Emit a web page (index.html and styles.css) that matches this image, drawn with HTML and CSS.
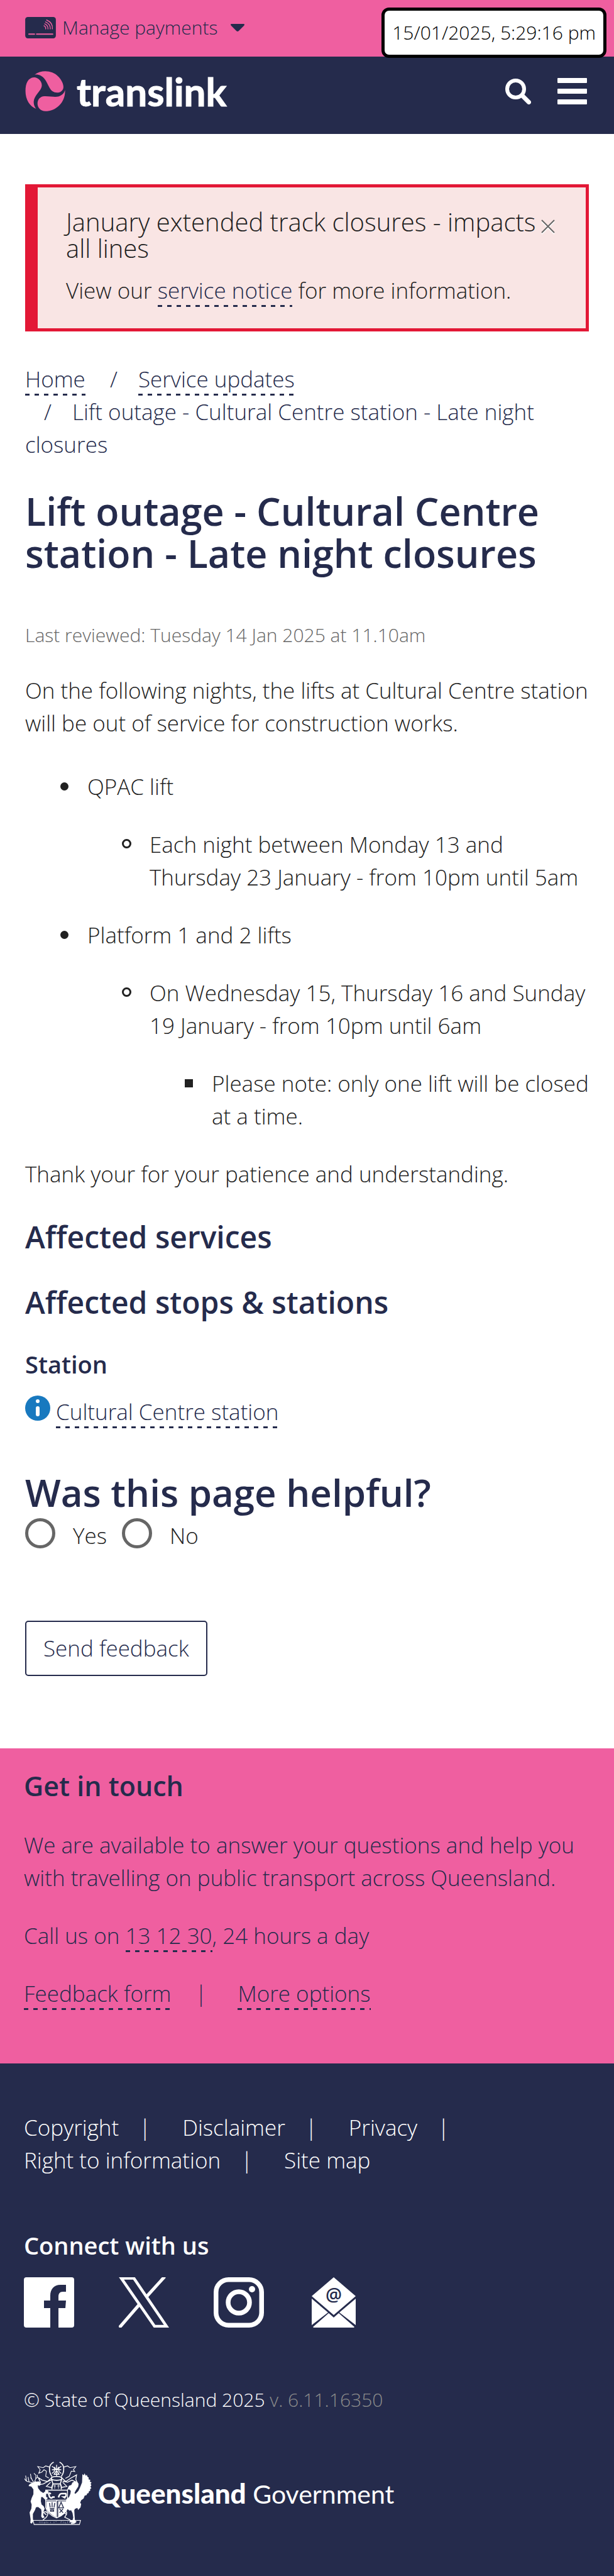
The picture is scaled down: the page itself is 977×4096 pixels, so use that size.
FILE: index.html
```html
<!DOCTYPE html>
<html lang="en">
<head>
<meta charset="utf-8">
<meta name="viewport" content="width=device-width">
<title>Lift outage - Cultural Centre station - Late night closures | Translink</title>
<link rel="stylesheet" href="styles.css">
</head>
<body>
<div class="topbar">
  <button class="payments" type="button">
    <svg class="card-icon" viewBox="0 0 175 122" aria-hidden="true">
      <rect width="175" height="122" rx="15" fill="currentColor"/>
      <g fill="none" stroke="#ef5fa0" stroke-width="6" stroke-linecap="round">
        <path d="M21 98h32M65 98h92" stroke-width="7"/>
        <path d="M107 50q11 5 10 18M111 39q20 9 19 29M116 28q29 12 27 40M122 17q37 16 33 51" stroke-width="5"/>
      </g>
    </svg>
    Manage payments
    <svg class="caret" viewBox="0 0 22 12" aria-hidden="true"><path d="M1 0h20q2 1 0 3l-8 8q-2 2-4 0L1 3Q-1 1 1 0z" fill="currentColor"/></svg>
  </button>
  <time class="clock">15/01/2025, 5:29:16 pm</time>
</div>
<header class="header">
  <a class="brand" href="#">
    <svg class="brand-mark" viewBox="54 49 232 234" aria-hidden="true">
      <g fill="#ef5fa0">
        <path d="M108 70C150 40 210 45 245 80C270 105 280 135 274 152C266 174 235 182 210 165C188 147 177 90 145 76C132 70 120 68 108 70Z"/>
        <path d="M105 86C130 86 152 110 150 135C147 165 105 190 103 225C102 245 110 260 117 268C80 255 55 215 55 165C55 120 70 88 105 86Z"/>
        <path d="M285 160C288 230 235 282 170 282C145 282 125 262 125 238C125 215 140 196 165 195C200 194 225 203 250 196C268 190 280 178 285 160Z"/>
      </g>
    </svg>
    <span>translink</span>
  </a>
  <div class="tools">
    <button class="icon-button" type="button" aria-label="Search">
      <svg class="search-icon" viewBox="0 0 41 41" aria-hidden="true"><g fill="none" stroke="currentColor"><circle cx="16.500" cy="16.500" r="13.500" stroke-width="6"/><path d="M27 27l10.500 10.500" stroke-width="7" stroke-linecap="round"/></g></svg>
    </button>
    <button class="icon-button" type="button" aria-label="Menu">
      <svg class="menu-icon" viewBox="0 0 47 42" aria-hidden="true"><g fill="currentColor"><rect width="47" height="8" rx="1"/><rect y="17" width="47" height="8" rx="1"/><rect y="34" width="47" height="8" rx="1"/></g></svg>
    </button>
  </div>
</header>

<main class="main">
  <section class="alert">
    <div class="alert-head">
      <h2 class="alert-title">January extended track closures - impacts all lines</h2>
      <button class="close" type="button" aria-label="Close"><svg viewBox="0 0 24 24" aria-hidden="true"><path d="M2 4l20 20M22 4L2 24" stroke="#fff" stroke-width="2"/><path d="M2 2l20 20M22 2L2 22" stroke="#666" stroke-width="2"/></svg></button>
    </div>
    <p class="alert-text">View our <a class="link" href="#">service notice</a> for more information.</p>
  </section>

  <nav aria-label="Breadcrumb">
    <ol class="crumbs">
      <li><a class="link" href="#">Home</a></li>
      <li><a class="link" href="#">Service updates</a></li>
      <li>Lift outage - Cultural Centre station - Late night closures</li>
    </ol>
  </nav>

  <h1 class="title">Lift outage - Cultural Centre station - Late night closures</h1>
  <p class="reviewed">Last reviewed: Tuesday 14 Jan 2025 at 11.10am</p>

  <div class="content">
    <p>On the following nights, the lifts at Cultural Centre station will be out of service for construction works.</p>
    <ul class="list">
      <li>QPAC lift
        <ul>
          <li>Each night between Monday 13 and Thursday 23 January - from 10pm until 5am</li>
        </ul>
      </li>
      <li>Platform 1 and 2 lifts
        <ul>
          <li>On Wednesday 15, Thursday 16 and Sunday 19 January - from 10pm until 6am
            <ul>
              <li>Please note: only one lift will be closed at a time.</li>
            </ul>
          </li>
        </ul>
      </li>
    </ul>
    <p>Thank your for your patience and understanding.</p>
  </div>

  <h2 class="section-title">Affected services</h2>
  <h2 class="section-title">Affected stops &amp; stations</h2>
  <h3 class="sub-title">Station</h3>
  <p class="station">
    <svg class="info-icon" viewBox="0 0 40 40" aria-hidden="true"><circle cx="20" cy="20" r="20" fill="#1879bf"/><circle cx="20" cy="9" r="3" fill="#fff"/><path d="M20 20v10" stroke="#fff" stroke-width="6" stroke-linecap="round"/></svg>
    <span><a class="link" href="#">Cultural Centre station</a></span>
  </p>

  <form class="feedback">
    <h2 class="title helpful">Was this page helpful?</h2>
    <div class="choices">
      <label class="choice"><input type="radio" name="helpful" value="yes">Yes</label>
      <label class="choice"><input type="radio" name="helpful" value="no">No</label>
    </div>
    <button class="send" type="button">Send feedback</button>
  </form>
</main>

<section class="contact">
  <h2 class="section-title">Get in touch</h2>
  <p>We are available to answer your questions and help you with travelling on public transport across Queensland.</p>
  <p>Call us on <a class="link" href="#">13 12 30</a>, 24 hours a day</p>
  <ul class="inline-links">
    <li><a class="link" href="#">Feedback form</a></li>
    <li><a class="link" href="#">More options</a></li>
  </ul>
</section>

<footer class="footer">
  <ul class="footer-links">
    <li><a href="#">Copyright</a></li>
    <li><a href="#">Disclaimer</a></li>
    <li><a href="#">Privacy</a></li>
    <li><a href="#">Right to information</a></li>
    <li><a href="#">Site map</a></li>
  </ul>
  <h3 class="sub-title connect">Connect with us</h3>
  <div class="social">
    <a href="#" aria-label="Facebook"><svg viewBox="0 0 80 80"><path fill="currentColor" d="M4 0h72a4 4 0 0 1 4 4v72a4 4 0 0 1-4 4H55V49h11l1-12H55v-6c0-5 2-8 7-8h5V12h-9C48 12 42 19 42 29v8H32v12h10v31H4a4 4 0 0 1-4-4V4a4 4 0 0 1 4-4z"/></svg></a>
    <a href="#" aria-label="X"><svg viewBox="0 0 80 80"><path fill="none" stroke="currentColor" stroke-width="4.500" d="M4 1.500h20L76 78H57z"/><path fill="none" stroke="currentColor" stroke-width="5" d="M73-1L44 31M33 43L1 80"/></svg></a>
    <a href="#" aria-label="Instagram"><svg viewBox="0 0 80 80"><g fill="none" stroke="currentColor" stroke-width="7.500"><rect x="3.750" y="3.750" width="72.500" height="72.500" rx="20"/><circle cx="40" cy="40" r="17"/></g><circle cx="61" cy="19" r="5" fill="currentColor"/></svg></a>
    <a href="#" aria-label="Email"><svg viewBox="0 0 80 80"><g fill="currentColor"><path d="M40 0l35 30-35 30L5 30z"/><path d="M5 34l26 22L5 76zM75 34L49 56l26 20z"/><path d="M7 79l25-22 8 7 8-7 25 22-1 1H8z"/></g><text class="at" x="40" y="38" text-anchor="middle">@</text></svg></a>
  </div>
  <p class="legal">© State of Queensland 2025 <span>v. 6.11.16350</span></p>
  <a class="gov" href="#">
    <svg class="crest" viewBox="24 20 392 364" aria-hidden="true">
      <g fill="#fff">
        <path d="M56 150l14-8 12-4 8-6 6 3 14-2 6 5 6 14-8 6-10-2 2 16 14 18 16 10 14-12 10-2 8 8-2 10-16 2-2 14 14 8-4 8-12 2-14-14-8 0-2 24 4 18 12 10 6 14-6 16-2 22 8 14-14 3-6-10 2-24-2-16-18-14-12 2-6 16-12 22 0 24 2 18-8 14-9-4 2-20-6-40 10-22 2-24-6-18 6-20 10-22 0-28-12-16-16-3z"/>
        <path d="M284 158l14-4 6-14 14-7 14 4 8 10-2 16-14 22-8 16 6 4 16-16 10-20 12-30 2-48 8 8 4-12 8 14 5-6 5 13 6 2 0 12 10 2-3 10 10 6-6 8 5 8-6 8 6 8-8 6 2 8-9 6-1 8-9 4-2 8-12 4-6 16-14 10-6 14 6 8-4 20-14 14-4-12-14 6-4 8 2 34 2 24 10 8-12 10-16 4-6-2 4-8-14-2 6-8 14-2 4-16-4-26-8-16-10 2-10-8-8 4-12-14 2-14-4-12 12-6 2-16 16-12 8-20 2-16-8-8-8 0-8 8z"/>
        <path d="M154 248h56v92q-44-20-56-52zM222 248h56v40q-10 32-52 52h-4z"/>
      </g>
      <g fill="none" stroke="#fff" stroke-width="4">
        <path d="M28 118q8 16 24 18l24 6M40 134l-6-34M54 136l-6-28M80 138l-14-24-4-24M70 116l-8-4M86 134l6-14 2-22-12-12M92 118l10-8 0-14"/>
        <path d="M150 184h126v58H150zM150 184q6 10 0 20v80q12 42 63 60 51-18 63-60V184M213 242v102" stroke-width="5"/>
        <path d="M186 180q-2-18 6-32h42q8 14 6 32M192 148l-8-26M234 148l8-26M184 110q30-10 58 0v12q-28 10-58 0z" stroke-width="6"/>
        <path d="M202 152v24M195 160h14M224 152v24M217 160h14" stroke-width="3"/>
        <path d="M186 46l14 10v20l-14 12M240 46l-14 10v20l14 12M186 66h54M213 38v66M196 92h34M200 50l26 40M226 50l-26 40" stroke-width="5"/>
        <path d="M196 22q-26 12-24 42 0 22 14 40M230 22q26 12 24 42 0 22-14 40" stroke-width="6"/>
        <path d="M170 50l-20-6-14 10-32-6 14 18-8 20 18-6 12-14 14 8-4 30 18 10M256 50l20-6 14 10 34-6-14 18 8 10-20-2-12 30-22 12"/>
        <path d="M182 114l-22 20-30-8-22-14 12 28-10 12 26-4 30-16 20-8M244 114l22 20 30-20 32-18-4 26 8 18-30-14-26 12-28-6M178 138l-24 24 32 8 6-22M248 138l24 24-30 6-6-20" stroke-width="5"/>
        <path d="M154 326q-26-18-6-18 26 6 4 34l-18 14M272 326q-22-16-8-20 16 6-4 34l32 16" stroke-width="5"/>
        <path d="M77 358h274l-6 24H83z" stroke-width="4"/>
      </g>
      <g fill="none" stroke="#252b4c" stroke-width="5">
        <path d="M172 258l4 26M187 254v30M202 258l-4 26M174 290h26M178 298h18v8h-18z"/>
        <path d="M239 254l-14 32h28zM230 292l20 22M250 292l-20 22"/>
      </g>
      <g fill="none" stroke="#fff" stroke-width="9"><path d="M166 202l6 20q10 14 18 2l12 0M170 198l10 8M224 226q6-24 20-22l22 0q8 20-12 20l10 6"/></g>
      <path d="M114 374v-10M122 374v-10M130 374v-10M140 366v8h6v-8M154 374v-10M162 366v8M178 366v8M198 374v-10M206 366h8M238 374v-10h6M252 374v-10M262 366v8h6M276 374v-10h6M290 374v-10M302 366v8h8" fill="none" stroke="#aab0c4" stroke-width="2"/>
    </svg>
    <span><b>Queensland</b> Government</span>
  </a>
</footer>
</body>
</html>
```

FILE: styles.css
```css
:root {
  --navy: #252b4c;
  --pink: #ef5fa0;
}

*, *::before, *::after { box-sizing: border-box; }

body {
  margin: 0;
  background: #fff;
  color: #212121;
  font: 300 35px/52px "Open Sans", "Noto Sans", sans-serif;
}

h1, h2, h3, p, ul, ol { margin: 0; }
ol, ul { padding: 0; }
svg { display: block; }
a { color: inherit; text-decoration: none; }

button {
  margin: 0;
  padding: 0;
  border: 0;
  background: none;
  color: inherit;
  font: inherit;
}

.link {
  padding-bottom: 3px;
  color: var(--navy);
  background: repeating-linear-gradient(90deg, var(--navy) 0 7px, transparent 7px 15px) 0 100% / 100% 3px no-repeat;
}

.topbar {
  position: relative;
  display: flex;
  align-items: flex-start;
  height: 90px;
  padding: 20px 40px;
  background: var(--pink);
  color: var(--navy);
}

.payments {
  display: flex;
  align-items: center;
  gap: 10px;
  font-size: 30px;
  line-height: 48px;
}

.card-icon { width: 49px; height: 34px; }
.caret { width: 24px; height: 12px; margin-left: 10px; }

.clock {
  position: absolute;
  top: 12px;
  right: 12px;
  padding: 14px 12px;
  border: 5px solid #000;
  border-radius: 12px;
  background: #fff;
  color: #000;
  font-size: 30px;
  line-height: 42px;
}

.header {
  display: flex;
  align-items: center;
  justify-content: space-between;
  padding: 23px 43px 36px 40px;
  background: var(--navy);
  color: #fff;
}

.brand { display: flex; align-items: center; gap: 18px; }
.brand-mark { width: 64px; height: 64px; }

.brand span {
  font: 700 62px/64px Lato, sans-serif;
  -webkit-text-stroke: 1px #fff;
}

.tools { display: flex; align-items: center; gap: 42px; }
.search-icon { width: 41px; height: 41px; }
.menu-icon { width: 47px; height: 42px; }

.main { padding: 80px 40px 115px; }

.alert {
  padding: 34px 48px 34px 45px;
  border: 5px solid #e31836;
  border-left-width: 20px;
  background: #f9e5e4;
}

.alert-head { display: flex; justify-content: space-between; }
.alert-title { font-size: 40px; font-weight: 300; line-height: 42px; }
.close { align-self: flex-start; margin-top: 16px; }
.close svg { width: 24px; height: 24px; overflow: visible; }
.alert-text { margin-top: 20px; }

.crumbs {
  margin-top: 50px;
  color: var(--navy);
  list-style: none;
}

.crumbs li { display: inline-block; }
.crumbs li + li::before { content: "/"; padding: 0 33px 0 30px; }

.title {
  margin-top: 46px;
  color: var(--navy);
  font: 600 61px/67px "Open Sans", sans-serif;
}

.reviewed {
  margin-top: 73px;
  color: #666;
  font-size: 30px;
  line-height: 48px;
}

.content { margin: 38px -4px 0 0; }
.list { margin: 49px 0 40px; }
.list, .list ul { padding-left: 99px; list-style: none; }
.list ul { margin-top: 40px; }
.list > li + li { margin-top: 40px; }

.list li::before {
  content: "";
  display: inline-block;
  width: 13px;
  height: 13px;
  margin: 0 30px 0 -43px;
  border-radius: 50%;
  background: #212121;
  vertical-align: 7px;
}

.list ul li::before {
  width: 15px;
  height: 15px;
  margin: 0 29px 0 -44px;
  border: 3px solid #212121;
  background: none;
}

.list ul ul li::before {
  width: 13px;
  height: 13px;
  margin: 0 30px 0 -43px;
  border: 0;
  border-radius: 0;
  background: #212121;
}

.section-title {
  margin-top: 46px;
  color: var(--navy);
  font: 600 48px/56px "Open Sans", sans-serif;
}

.section-title + .section-title { margin-top: 48px; }

.sub-title {
  margin-top: 46px;
  color: var(--navy);
  font: 600 38px/48px "Open Sans", sans-serif;
}

.station {
  display: flex;
  align-items: flex-start;
  gap: 9px;
  margin-top: 26px;
}

.info-icon { width: 40px; height: 40px; }

.helpful { margin-top: 69px; font-size: 60px; }

.choices { display: flex; gap: 24px; margin-top: 7px; }

.choice {
  display: flex;
  align-items: flex-start;
  gap: 28px;
  line-height: 56px;
}

.choice input {
  width: 48px;
  height: 48px;
  margin: 0;
  border: 5px solid #666;
  border-radius: 50%;
  background: #fff;
  appearance: none;
}

.choice input:checked { background: var(--navy); }

.send {
  margin-top: 107px;
  padding: 16px 27px;
  border: 2px solid var(--navy);
  border-radius: 5px;
  color: var(--navy);
  line-height: 52px;
}

.contact {
  padding: 32px 38px 85px;
  background: var(--pink);
  color: var(--navy);
}

.contact .section-title { margin-top: 0; font-size: 43px; }
.contact p, .inline-links { margin-top: 40px; }

.inline-links, .footer-links {
  display: flex;
  flex-wrap: wrap;
  list-style: none;
}

.inline-links li + li::before { content: "|"; margin: 0 49px 0 38px; }

.footer {
  padding: 76px 38px 82px;
  background: var(--navy);
  color: #fff;
}

.footer-links { max-width: 800px; }
.footer-links li:not(:last-child)::after { content: "|"; margin: 0 50px 0 32px; }

.connect { margin-top: 85px; color: #fff; }

.social { display: flex; gap: 71px; margin-top: 27px; }
.social svg { width: 80px; height: 80px; }
.at { fill: var(--navy); font: 600 29px "Open Sans", sans-serif; }

.legal {
  margin-top: 91px;
  font-size: 30px;
  line-height: 48px;
}

.legal span { color: #8b8b8b; }

.gov {
  display: flex;
  align-items: center;
  gap: 10px;
  margin-top: 74px;
}

.crest { width: 108px; height: 101px; }
.gov span { font: 400 41px/60px Lato, sans-serif; }
.gov b { font-size: 44px; font-weight: 900; }
```
